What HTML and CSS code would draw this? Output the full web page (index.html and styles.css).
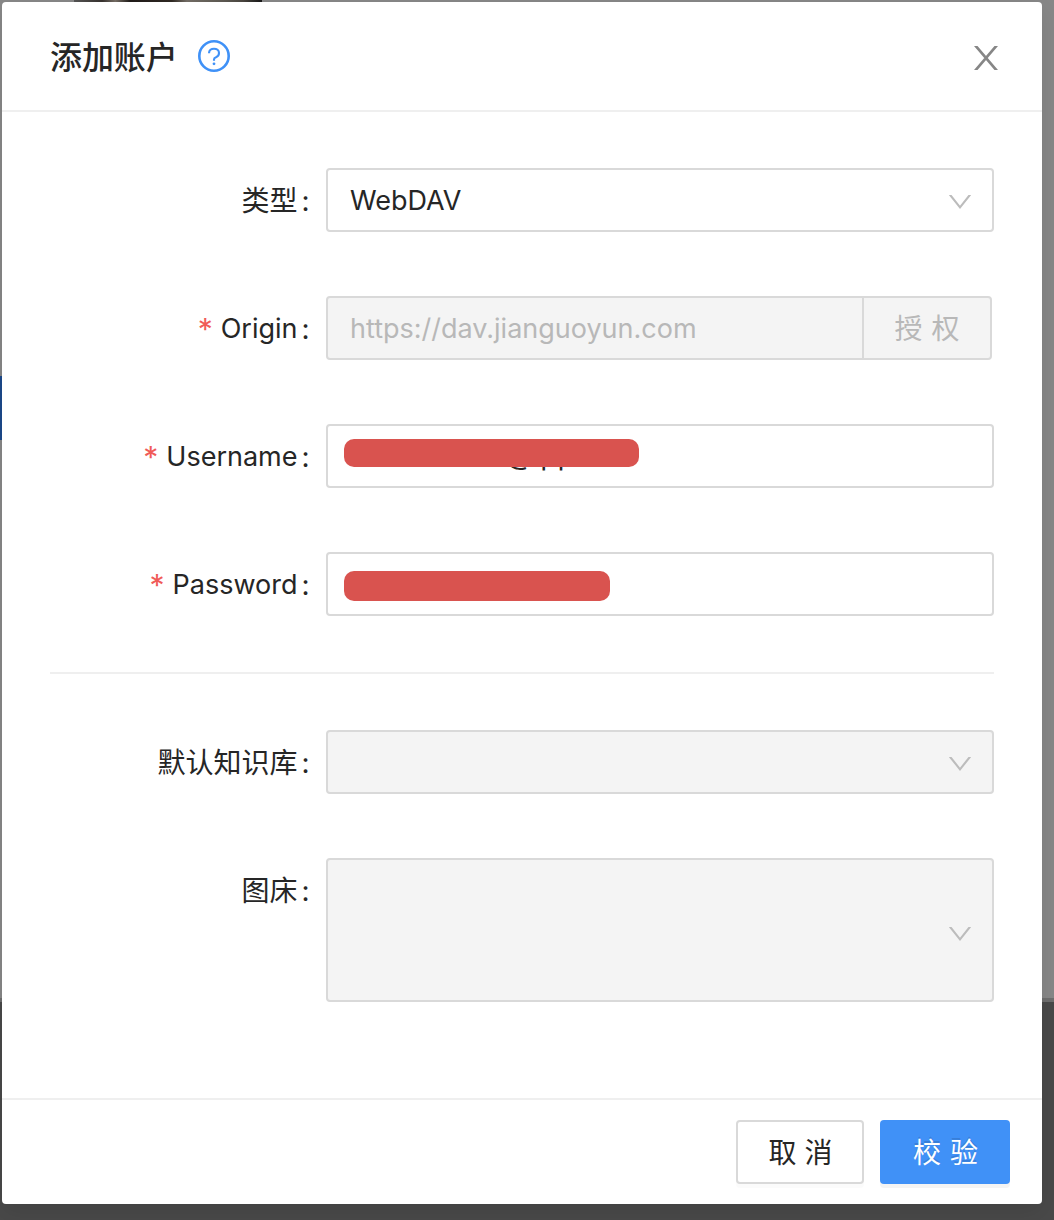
FILE: index.html
```html
<!DOCTYPE html>
<html lang="zh-CN">
<head>
<meta charset="utf-8">
<title>添加账户</title>
<link rel="stylesheet" href="styles.css">
</head>
<body>
<div class="thumbnail"></div>
<div class="selected-item"></div>
<main class="modal">
  <header class="modal-header">
    <h1 class="title">添加账户</h1>
    <svg class="help" viewBox="0 0 32 32" fill="none" stroke="currentColor">
      <circle cx="16" cy="16" r="14.7" stroke-width="2.6"/>
      <path d="M11 13.2C11 10.2 13.2 8.7 16 8.7s5 1.7 5 4.3c0 2.1-1.2 3.5-3 4.2-1.4.5-2 1.2-2 2.4v1.2" stroke-width="2.1"/>
      <circle cx="16" cy="23.8" r="1.4" fill="currentColor" stroke="none"/>
    </svg>
    <svg class="close" viewBox="0 0 24 24"><path d="M.9-1 23.1 25M23.1-1 .9 25" fill="none" stroke="currentColor" stroke-width="2.7"/></svg>
  </header>
  <form class="form">
    <div class="row">
      <label class="label"><span>类型</span><span class="colon">:</span></label>
      <div class="control"><span class="latin">WebDAV</span><svg class="arrow" viewBox="0 0 22 14"><path d="M.4-1 11 12.3 21.6-1" fill="none" stroke="currentColor" stroke-width="2.1"/></svg></div>
    </div>
    <div class="row">
      <label class="label"><span class="required">*</span><span class="latin">Origin</span><span class="colon">:</span></label>
      <div class="group">
        <div class="control disabled group-input"><span class="latin">https://dav.jianguoyun.com</span></div>
        <button type="button" class="authorize" disabled>授 权</button>
      </div>
    </div>
    <div class="row">
      <label class="label"><span class="required">*</span><span class="latin">Username</span><span class="colon">:</span></label>
      <div class="control"><span class="account"><span class="at">@</span>qq</span><span class="mask mask-user"></span></div>
    </div>
    <div class="row">
      <label class="label"><span class="required">*</span><span class="latin">Password</span><span class="colon">:</span></label>
      <div class="control"><span class="mask mask-password"></span></div>
    </div>
    <hr class="divider">
    <div class="row">
      <label class="label"><span>默认知识库</span><span class="colon">:</span></label>
      <div class="control disabled"><svg class="arrow" viewBox="0 0 22 14"><path d="M.4-1 11 12.3 21.6-1" fill="none" stroke="currentColor" stroke-width="2.1"/></svg></div>
    </div>
    <div class="row">
      <label class="label"><span>图床</span><span class="colon">:</span></label>
      <div class="control disabled tall"><svg class="arrow" viewBox="0 0 22 14"><path d="M.4-1 11 12.3 21.6-1" fill="none" stroke="currentColor" stroke-width="2.1"/></svg></div>
    </div>
  </form>
  <footer class="modal-footer">
    <button type="button" class="button cancel">取 消</button>
    <button type="button" class="button primary">校 验</button>
  </footer>
</main>
</body>
</html>
```
FILE: styles.css
```css
* { box-sizing: border-box; }

body {
  margin: 0;
  width: 1054px;
  height: 1220px;
  padding: 2px;
  overflow: hidden;
  position: relative;
  background: linear-gradient(#888 0 998px, #6f6f6f 998px 1002px, #494949 1002px);
  font: 28px/42px Inter, "Noto Sans CJK SC", sans-serif;
  color: #262626;
}

.thumbnail {
  position: absolute;
  left: 74px;
  top: 0;
  width: 188px;
  height: 2px;
  background: linear-gradient(90deg, #555, #38332f 15%, #776f66 22%, #201b19 30%, #302923 52%, #746e66 60%, #5d5952 80%, #4a4640 90%, #171717);
}

.selected-item {
  position: absolute;
  left: 0;
  top: 376px;
  width: 2px;
  height: 64px;
  background: #1c4a8c;
}

.modal {
  position: relative;
  width: 1040px;
  height: 1202px;
  display: flex;
  flex-direction: column;
  background: #fff;
  border-radius: 4px;
  box-shadow: 0 8px 24px rgba(0, 0, 0, .1);
}

.modal-header {
  height: 110px;
  padding: 0 44px 0 48px;
  display: flex;
  align-items: center;
  border-bottom: 2px solid #efefef;
}

.title {
  margin: 0;
  padding-top: 4px;
  width: 148px;
  font-size: 32px;
  line-height: 44px;
  font-weight: 500;
  letter-spacing: -.1px;
}

.help { width: 32px; height: 32px; color: #3f91f7; }
.close { width: 24px; height: 24px; margin: 4px 0 0 auto; color: #868686; }

.form {
  flex: 1;
  padding: 56px 48px 0;
}

.row {
  display: flex;
  align-items: flex-start;
  margin-bottom: 64px;
}

.label {
  width: 276px;
  height: 64px;
  padding: 2px 16.5px 0 0;
  display: flex;
  align-items: center;
  justify-content: flex-end;
}

.colon { width: 8px; margin-left: 4px; }
.required { margin-right: 8px; color: #f05b58; font-size: 30px; }
.latin { font-size: 27px; }
.control .latin { padding-top: 1px; }

.control {
  position: relative;
  width: 668px;
  height: 64px;
  padding: 0 22px;
  display: flex;
  align-items: center;
  background: #fff;
  border: 2px solid #d9d9d9;
  border-radius: 4px;
}

.disabled { background: #f4f4f4; color: #b8b8b8; }
.tall { height: 144px; }
.tall .arrow { margin-top: 8px; }
.arrow { width: 22px; height: 14px; margin: 4px -1px 0 auto; color: #bcbcbc; }

.group { display: flex; width: 666px; }
.group-input { width: 538px; border-radius: 4px 0 0 4px; }

.authorize {
  width: 130px;
  height: 64px;
  margin-left: -2px;
  padding: 2px 0 0;
  font: inherit;
  word-spacing: 1px;
  color: #b8b8b8;
  background: #f4f4f4;
  border: 2px solid #d9d9d9;
  border-radius: 0 4px 4px 0;
  position: relative;
}

.account { margin-left: 156px; padding-bottom: 2px; }
.at { letter-spacing: -3px; }

.mask {
  position: absolute;
  left: 16px;
  border-radius: 10px;
  background: #d9534f;
}

.mask-user { top: 13px; width: 295px; height: 28px; }
.mask-password { top: 17px; width: 266px; height: 30px; }

.divider {
  height: 2px;
  margin: -8px 0 56px;
  border: 0;
  background: #efefef;
}

.modal-footer {
  height: 106px;
  padding: 20px 32px;
  display: flex;
  justify-content: flex-end;
  gap: 16px;
  border-top: 2px solid #efefef;
}

.button {
  height: 64px;
  padding: 2px 0 0 1px;
  font: inherit;
  border-radius: 4px;
}

.cancel {
  width: 128px;
  color: #262626;
  background: #fff;
  border: 2px solid #d9d9d9;
  box-shadow: 0 4px 0 rgba(0, 0, 0, .016);
}

.primary {
  width: 130px;
  word-spacing: 1px;
  color: #fff;
  background: #4091f7;
  border: 0;
  box-shadow: 0 4px 0 rgba(0, 0, 0, .043);
  text-shadow: 0 -2px 0 rgba(0, 0, 0, .12);
}
```
